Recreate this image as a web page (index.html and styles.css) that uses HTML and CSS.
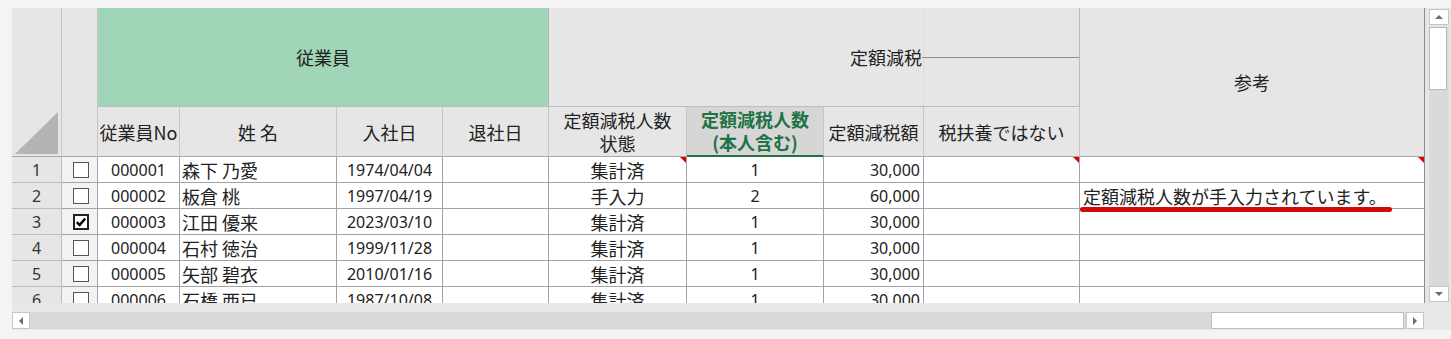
FILE: index.html
```html
<!DOCTYPE html>
<html lang="ja">
<head>
<meta charset="utf-8">
<title>定額減税</title>
<link rel="stylesheet" href="styles.css">
</head>
<body>
<div class="sheet">
  <div class="main">
    <div class="viewport">
      <div class="grid">
        <div class="c h corner"><svg width="49" height="148" viewBox="0 0 49 148"><polygon points="3,146 46,104 46,146" fill="#b4b4b4"/></svg></div>
        <div class="c h chkhead"></div>
        <div class="c h green">従業員</div>
        <div class="c h tax"><span class="taxlabel">定額減税</span><span class="taxline"></span></div>
        <div class="c h note">参考</div>
        <div class="c h r2">従業員No</div>
        <div class="c h r2">姓 名</div>
        <div class="c h r2">入社日</div>
        <div class="c h r2">退社日</div>
        <div class="c h r2 two"><span>定額減税人数<br>状態</span></div>
        <div class="c h r2 two sel"><span>定額減税人数<br>(本人含む)</span></div>
        <div class="c h r2">定額減税額</div>
        <div class="c h r2">税扶養ではない</div>

        <div class="c rh">1</div>
        <div class="c ck"><span class="cb"></span></div>
        <div class="c n">000001</div>
        <div class="c l">森下 乃愛</div>
        <div class="c n">1974/04/04</div>
        <div class="c"></div>
        <div class="c cm">集計済</div>
        <div class="c n">1</div>
        <div class="c n r">30,000</div>
        <div class="c cm"></div>
        <div class="c cm last"></div>

        <div class="c rh">2</div>
        <div class="c ck"><span class="cb"></span></div>
        <div class="c n">000002</div>
        <div class="c l">板倉 桃</div>
        <div class="c n">1997/04/19</div>
        <div class="c"></div>
        <div class="c">手入力</div>
        <div class="c n">2</div>
        <div class="c n r">60,000</div>
        <div class="c"></div>
        <div class="c l msg last">定額減税人数が手入力されています。<span class="mark"></span></div>

        <div class="c rh">3</div>
        <div class="c ck"><span class="cb on"><svg width="12" height="12" viewBox="0 0 12 12"><path d="M1.8 6.2 L4.6 9 L10.2 2.6" fill="none" stroke="#000" stroke-width="2.4"/></svg></span></div>
        <div class="c n">000003</div>
        <div class="c l">江田 優来</div>
        <div class="c n">2023/03/10</div>
        <div class="c"></div>
        <div class="c">集計済</div>
        <div class="c n">1</div>
        <div class="c n r">30,000</div>
        <div class="c"></div>
        <div class="c last"></div>

        <div class="c rh">4</div>
        <div class="c ck"><span class="cb"></span></div>
        <div class="c n">000004</div>
        <div class="c l">石村 徳治</div>
        <div class="c n">1999/11/28</div>
        <div class="c"></div>
        <div class="c">集計済</div>
        <div class="c n">1</div>
        <div class="c n r">30,000</div>
        <div class="c"></div>
        <div class="c last"></div>

        <div class="c rh">5</div>
        <div class="c ck"><span class="cb"></span></div>
        <div class="c n">000005</div>
        <div class="c l">矢部 碧衣</div>
        <div class="c n">2010/01/16</div>
        <div class="c"></div>
        <div class="c">集計済</div>
        <div class="c n">1</div>
        <div class="c n r">30,000</div>
        <div class="c"></div>
        <div class="c last"></div>

        <div class="c rh">6</div>
        <div class="c ck"><span class="cb"></span></div>
        <div class="c n">000006</div>
        <div class="c l">石橋 西已</div>
        <div class="c n">1987/10/08</div>
        <div class="c"></div>
        <div class="c">集計済</div>
        <div class="c n">1</div>
        <div class="c n r">30,000</div>
        <div class="c"></div>
        <div class="c last"></div>
      </div>
    </div>
    <div class="vscroll">
      <div class="btn"><span class="arr up"></span></div>
      <div class="vthumb"></div>
      <div class="vtrack"></div>
      <div class="btn"><span class="arr down"></span></div>
    </div>
  </div>
  <div class="hgap"></div>
  <div class="hbar">
    <div class="hbtn"><span class="arr left"></span></div>
    <div class="htrack"><div class="hthumb"></div></div>
    <div class="hbtn"><span class="arr right"></span></div>
  </div>
</div>
</body>
</html>
```
FILE: styles.css
```css
html, body { margin: 0; padding: 0; }
body {
  background: #f4f4f4;
  font-family: "Noto Sans CJK JP", "Noto Sans", sans-serif;
  color: #222;
}
.sheet {
  margin: 8px 0 0 12px;
  width: 1439px;
  background: #e8e8e8;
  padding-bottom: 1px;
}
.main { display: flex; height: 295px; }
.viewport {
  width: 1413px;
  height: 295px;
  overflow: hidden;
  background: #fff;
}
.grid {
  display: grid;
  grid-template-columns: 50px 36px 82px 157px 106px 106px 138px 137px 100px 156px 345px;
  grid-template-rows: 99px 50px repeat(6, 26px);
}
.c {
  box-sizing: border-box;
  border-right: 1px solid #a3a3a3;
  border-bottom: 1px solid #a3a3a3;
  display: flex;
  align-items: center;
  justify-content: center;
  font-size: 18px;
  line-height: 1;
  white-space: nowrap;
  position: relative;
  background: #fff;
}
.h { background: #e6e6e6; border-color: #c6c6c6; }
.corner { grid-column: 1; grid-row: 1 / 3; align-items: flex-end; border-bottom-color: #a8a8a8; }
.corner svg { display: block; }
.chkhead { grid-column: 2; grid-row: 1 / 3; border-bottom-color: #a8a8a8; }
.green {
  grid-column: 3 / 7; grid-row: 1;
  background: #a0d5b8;
  border-right-color: #b4b4b4;
  border-bottom-color: #bdbdbd;
}
.tax {
  grid-column: 7 / 11; grid-row: 1;
  justify-content: flex-start;
  border-bottom-color: #bdbdbd;
  border-right-color: #b8b8b8;
}
.taxlabel {
  box-sizing: border-box;
  width: 375px;
  align-self: stretch;
  display: flex;
  align-items: center;
  justify-content: flex-end;
  padding-right: 1px;
  border-right: 1px solid #dedede;
}
.taxline { flex: 1; height: 1px; background: #8e8e8e; margin-left: -2px; }
.note { grid-column: 11; grid-row: 1 / 3; border-right: 1px solid #8c8c8c; border-bottom-color: #a8a8a8; }
.r2 { grid-row: 2; border-bottom-color: #a8a8a8; }
.two span { text-align: center; line-height: 23px; }
.sel {
  background: #d6d6d6;
  border-bottom: 2px solid #217346;
  color: #217346;
  font-weight: bold;
}
.rh {
  background: #e6e6e6;
  border-color: #bdbdbd;
  font-family: "Noto Sans", sans-serif;
  font-size: 16px;
  color: #333;
}
.ck { background: #f3f3f3; }
.n { font-family: "Noto Sans", sans-serif; font-size: 16px; }
.l { justify-content: flex-start; padding-left: 2px; }
.r { justify-content: flex-end; padding-right: 3px; }
.last { border-right: 1px solid #8c8c8c; }
.msg { padding-left: 3px; }
.cb {
  box-sizing: border-box;
  width: 16px;
  height: 16px;
  border: 1px solid #555;
  background: #fff;
  display: flex;
  align-items: center;
  justify-content: center;
  margin-left: 2px;
}
.cb.on { border: 2px solid #222; }
.cm::after {
  content: "";
  position: absolute;
  top: 0;
  right: 0;
  width: 0;
  height: 0;
  border-top: 6px solid #e00000;
  border-left: 6px solid transparent;
}
.mark {
  position: absolute;
  left: 0;
  top: 24px;
  width: 312px;
  height: 5px;
  border-radius: 3px;
  background: #d20a0a;
  z-index: 2;
}
.vscroll {
  box-sizing: border-box;
  width: 26px;
  height: 295px;
  padding: 1px 2px 1px 4px;
  display: flex;
  flex-direction: column;
  background: #e6e6e6;
}
.btn, .hbtn {
  box-sizing: border-box;
  background: #fff;
  border: 1px solid #c6c6c6;
  display: flex;
  align-items: center;
  justify-content: center;
}
.btn { height: 16px; width: 20px; }
.vthumb {
  box-sizing: border-box;
  margin-top: 2px;
  width: 18px;
  height: 63px;
  background: #fff;
  border: 1px solid #b8b8b8;
  position: relative;
  z-index: 1;
}
.vtrack { flex: 1; background: #dadada; width: 20px; margin-top: -63px; }
.hgap { height: 9px; }
.hbar { display: flex; height: 17px; width: 1412px; }
.hbtn { width: 18px; height: 17px; }
.htrack {
  flex: 1;
  background: #dadada;
  display: flex;
  justify-content: flex-end;
}
.hthumb {
  box-sizing: border-box;
  width: 193px;
  margin-right: 2px;
  background: #fff;
  border: 1px solid #bdbdbd;
}
.arr { width: 0; height: 0; display: block; }
.arr.up { border-left: 4px solid transparent; border-right: 4px solid transparent; border-bottom: 4px solid #6e6e6e; }
.arr.down { border-left: 4px solid transparent; border-right: 4px solid transparent; border-top: 4px solid #6e6e6e; }
.arr.left { border-top: 4px solid transparent; border-bottom: 4px solid transparent; border-right: 4px solid #6e6e6e; }
.arr.right { border-top: 4px solid transparent; border-bottom: 4px solid transparent; border-left: 4px solid #6e6e6e; }
```
